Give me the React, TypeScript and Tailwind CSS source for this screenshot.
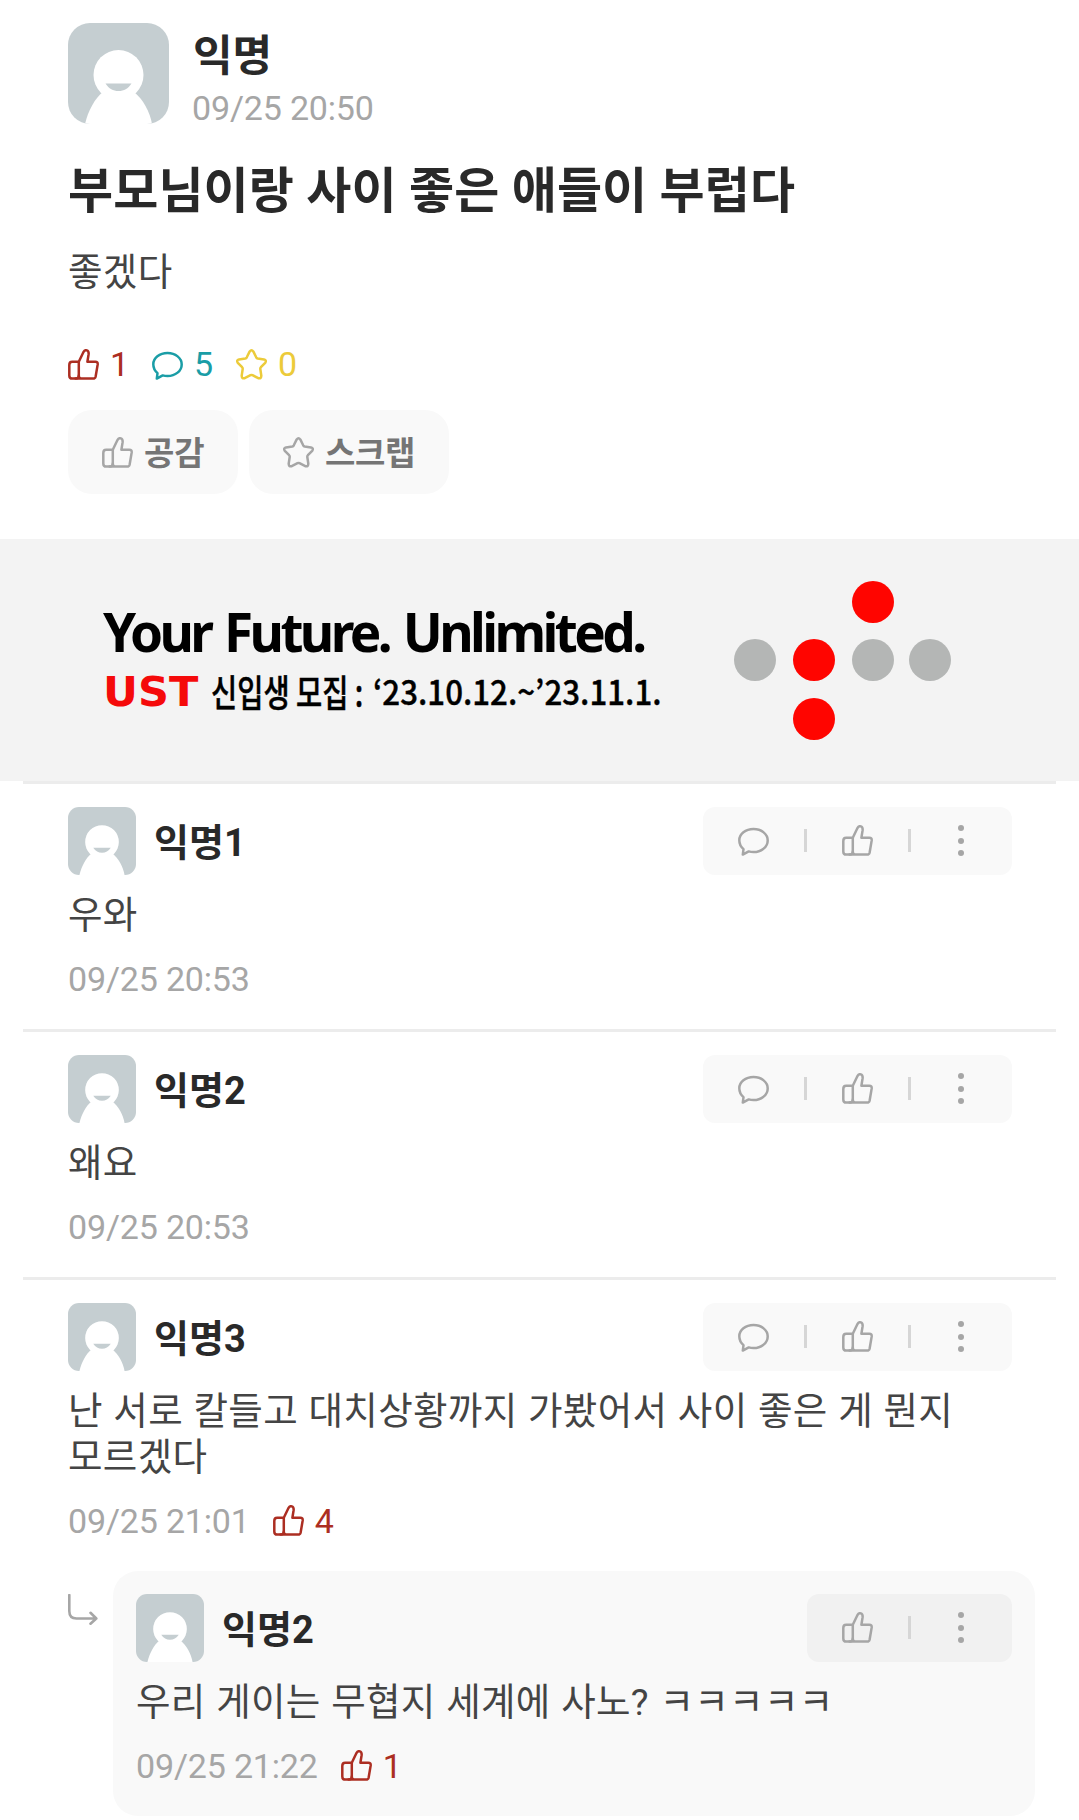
import type { ReactNode } from 'react';
import { clsx } from 'clsx';

type Comment = {
  author: string;
  lines: string[];
  date: string;
  likes?: number;
};

const comments: Comment[] = [
  { author: '익명1', lines: ['우와'], date: '09/25 20:53' },
  { author: '익명2', lines: ['왜요'], date: '09/25 20:53' },
  {
    author: '익명3',
    lines: ['난 서로 칼들고 대치상황까지 가봤어서 사이 좋은 게 뭔지', '모르겠다'],
    date: '09/25 21:01',
    likes: 4,
  },
];

const reply: Comment = {
  author: '익명2',
  lines: ['우리 게이는 무협지 세계에 사노? ㅋㅋㅋㅋㅋ'],
  date: '09/25 21:22',
  likes: 1,
};

function Icon({ children }: { children: ReactNode }) {
  return (
    <svg
      viewBox="0 0 31 31"
      className="size-[31px] shrink-0"
      fill="none"
      stroke="currentColor"
      strokeWidth="2.5"
      strokeLinecap="round"
      strokeLinejoin="round"
    >
      {children}
    </svg>
  );
}

function ThumbIcon() {
  return (
    <Icon>
      <path d="M10.3 12.8H4.2Q1.3 12.8 1.3 16V26.4Q1.3 29.6 4.2 29.6H25.2Q27.1 29.6 27.6 27.7L29.7 15.4Q29.9 12.800 27.400 12.800H19.400L20.600 5.200C21.100 .9 17 .2 15.600 2.800L10.800 12.800V26.500Q10.800 29.600 13.400 29.600" />
      <path d="M7.600 29.600Q10.800 29.600 10.800 26.500" />
    </Icon>
  );
}

function BubbleIcon() {
  return (
    <Icon>
      <path d="M15.500 4.100C7.500 4.100 1.300 9 1.300 15.300C1.300 19 3 22 5.500 24.100L4.800 29.600L10.700 26.400C12.200 26.800 13.800 27 15.500 27C23.500 27 29.700 21.800 29.700 15.400C29.700 9.100 23.500 4.100 15.500 4.100Z" />
    </Icon>
  );
}

function StarIcon() {
  return (
    <Icon>
      <path d="M13.700 2.400Q15.500 .1 17.300 2.400L20.200 8.300Q20.700 9.200 21.700 9.400L28 10.400Q30.900 11.200 29.200 13.800L24.900 18.200Q24.200 19 24.300 20L25.300 26.600Q25.400 30 22.300 29.200L16.500 26.200Q15.500 25.700 14.500 26.200L8.700 29.200Q5.600 30 5.700 26.600L6.700 20Q6.800 19 6.100 18.200L1.800 13.800Q.1 11.200 3 10.400L9.300 9.400Q10.300 9.200 10.800 8.300Z" />
    </Icon>
  );
}

function Avatar({ className }: { className: string }) {
  return (
    <div className={clsx('shrink-0 overflow-hidden bg-[#c5ced1]', className)}>
      <svg viewBox="0 0 101 101" className="size-full">
        <path d="M17 101C20 88 27 75 35 69H66C75 76 82 89 84 101Z" fill="#fff" />
        <circle cx="50.5" cy="52" r="25" fill="#fff" />
        <path d="M37.500 60.500H63.500C60 65.800 56 68 50.500 68S41 65.800 37.500 60.500Z" fill="#c5ced1" />
      </svg>
    </div>
  );
}

function Divider() {
  return <span className="-mx-[1.5px] mb-[2px] h-[23px] w-[3px] bg-[#d6d6d6]" />;
}

function Cell({ children, className }: { children: ReactNode; className: string }) {
  return <button className={clsx('flex h-full items-center pb-[1px]', className)}>{children}</button>;
}

function Actions({ nested = false }: { nested?: boolean }) {
  return (
    <div
      className={clsx(
        'flex h-[68px] items-center rounded-xl text-[#a6a6a6]',
        nested ? 'w-[205px] bg-[#f1f1f1]' : 'w-[309px] bg-[#f9f9f9]',
      )}
    >
      {!nested && (
        <>
          <Cell className="w-[102.5px] pl-[35px]">
            <BubbleIcon />
          </Cell>
          <Divider />
        </>
      )}
      <Cell className={nested ? 'w-[102.5px] pl-[35px]' : 'w-[104px] pl-[36.5px]'}>
        <ThumbIcon />
      </Cell>
      <Divider />
      <Cell className="w-[102.5px] pl-[48.5px]">
        <span className="flex flex-col gap-[6.5px]">
          <i className="size-[6px] rounded-full bg-[#a6a6a6]" />
          <i className="size-[6px] rounded-full bg-[#a6a6a6]" />
          <i className="size-[6px] rounded-full bg-[#a6a6a6]" />
        </span>
      </Cell>
    </div>
  );
}

function CommentBody({ comment, nested }: { comment: Comment; nested?: boolean }) {
  return (
    <>
      <div className="flex items-center">
        <Avatar className="size-[68px] rounded-[11px]" />
        <b className="ml-[18px] flex-1 pt-[4px] text-[38px] leading-[64px] text-[#292929]">{comment.author}</b>
        <Actions nested={nested} />
      </div>
      <div className="mt-[17px] text-[37.5px] leading-[46px] tracking-[.35px] [word-spacing:.8px] whitespace-nowrap text-[#444]">
        {comment.lines.map((line) => (
          <p key={line}>{line}</p>
        ))}
      </div>
      <div className="mt-[19px] flex h-[44px] items-center text-[34px] text-[#a6a6a6]">
        <span className="tracking-[-.17px]">{comment.date}</span>
        {comment.likes && (
          <span className="ml-[23px] flex items-center gap-[11px] text-[#ac2e22]">
            <span className="pb-[2px]">
              <ThumbIcon />
            </span>
            {comment.likes}
          </span>
        )}
      </div>
    </>
  );
}

function Dot({ red = false }: { red?: boolean }) {
  return <span className={clsx('size-[42px] rounded-full', red ? 'bg-[#ff0500]' : 'bg-[#b4b6b5]')} />;
}

function AdBanner() {
  return (
    <div className="flex h-[242px] bg-[#f3f3f3]">
      <div className="w-[734px] pt-[63px] pl-[103px] whitespace-nowrap text-black">
        <p className="font-['Noto_Sans',sans-serif] text-[53px] leading-[60px] font-bold tracking-[-3.6px] [word-spacing:3.5px]">
          Your Future. Unlimited.
        </p>
        <div className="flex h-[60px] items-center">
          <b className="w-[108px] pt-[2px] font-['DejaVu_Sans',sans-serif] text-[41px]">
            <span className="inline-block origin-left scale-x-105 text-[#f50a0a]">UST</span>
          </b>
          <span className="w-[162px] pb-[1px] font-['Noto_Sans_CJK_KR',sans-serif] text-[37px] font-medium">
            <span className="inline-block origin-left scale-x-[.77] [-webkit-text-stroke:.5px_#000]">신입생 모집 :</span>
          </span>
          <span className="pb-[4px] font-['Noto_Sans_CJK_KR',sans-serif] text-[34px] font-medium">
            <span className="inline-block origin-left scale-x-[.92] [-webkit-text-stroke:.4px_#000]">
              ‘23.10.12.~’23.11.1.
            </span>
          </span>
        </div>
      </div>
      <div className="mt-[41.5px] grid h-[159px] grid-cols-[59px_59px_57px_42px] content-between">
        <span />
        <span />
        <Dot red />
        <span />
        <Dot />
        <Dot red />
        <Dot />
        <Dot />
        <span />
        <Dot red />
      </div>
    </div>
  );
}

export default function App() {
  return (
    <main className="h-[1820px] w-[1079px] overflow-hidden bg-white font-['Roboto','Noto_Sans_CJK_KR',sans-serif]">
      <section className="h-[539px] px-[68px] pt-[23px]">
        <div className="flex">
          <Avatar className="size-[101px] rounded-[22px]" />
          <div className="ml-[24px] pt-[3px]">
            <b className="block text-[43px] leading-[60px] text-[#292929]">익명</b>
            <p className="-mt-[2px] -ml-[1px] text-[34px] leading-[48px] tracking-[-.17px] text-[#a6a6a6]">09/25 20:50</p>
          </div>
        </div>
        <h1 className="mt-[28px] text-[49px] leading-[64px] font-bold tracking-[.12px] whitespace-nowrap text-[#292929]">
          부모님이랑 사이 좋은 애들이 부럽다
        </h1>
        <p className="mt-[25px] text-[37.5px] leading-[46px] tracking-[.35px] text-[#444]">좋겠다</p>

        <div className="mt-[47px] flex h-[44px] items-center text-[34px]">
          <span className="flex w-[84px] items-center gap-[11px] text-[#ac2e22]">
            <ThumbIcon />1
          </span>
          <span className="flex w-[84px] items-center gap-[11px] text-[#1a9da6]">
            <BubbleIcon />5
          </span>
          <span className="flex items-center gap-[11px] text-[#eccb3a]">
            <StarIcon />0
          </span>
        </div>

        <div className="mt-[24px] flex gap-[11px] text-[33px] font-bold text-[#757575]">
          <button className="flex h-[84px] w-[170px] items-center gap-[11px] rounded-3xl bg-[#f9f9f9] pl-[34px]">
            <span className="text-[#a6a6a6]">
              <ThumbIcon />
            </span>
            <span className="pt-[3px]">공감</span>
          </button>
          <button className="flex h-[84px] w-[200px] items-center gap-[11px] rounded-3xl bg-[#f9f9f9] pl-[34px]">
            <span className="text-[#a6a6a6]">
              <StarIcon />
            </span>
            <span className="pt-[3px] tracking-[-.3px]">스크랩</span>
          </button>
        </div>
      </section>

      <AdBanner />

      {comments.map((comment) => (
        <article
          key={comment.author}
          className="mx-[23px] border-t-[3px] border-[#ececec] pt-[23px] pr-[44px] pb-[28px] pl-[45px]"
        >
          <CommentBody comment={comment} />
        </article>
      ))}

      <div className="flex pl-[68px]">
        <svg
          viewBox="0 0 30 31"
          className="mt-[23px] h-[31px] w-[30px]"
          fill="none"
          stroke="#a6a6a6"
          strokeWidth="2.6"
          strokeLinecap="round"
          strokeLinejoin="round"
        >
          <path d="M1.300 1V17Q1.300 24.500 8.500 24.500H28.300M22.500 18.800L28.300 24.500L22.500 29.700" />
        </svg>
        <article className="ml-[15px] h-[245px] w-[922px] rounded-[25px] bg-[#f9f9f9] px-[23px] pt-[23px]">
          <CommentBody comment={reply} nested />
        </article>
      </div>
    </main>
  );
}
